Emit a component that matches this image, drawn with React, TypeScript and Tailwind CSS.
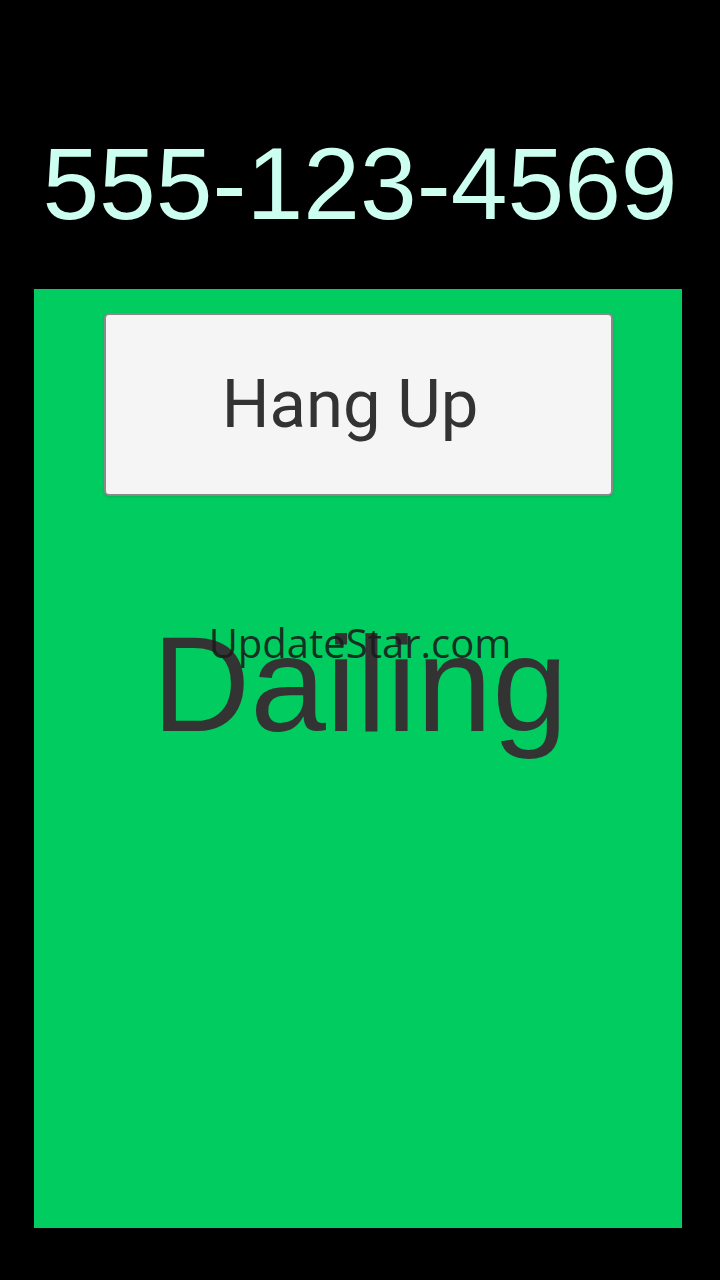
import React from "react";

export default function App() {
  return (
    <div className="w-[720px] h-[1280px] bg-black flex flex-col relative overflow-hidden">
      <div className="h-[289px] w-full pt-[133px] flex justify-center">
        <div
          className="text-[102px] leading-none text-[#ccfff0] h-[102px]"
          style={{ fontFamily: '"Liberation Sans", Arial, sans-serif' }}
        >
          555-123-4569
        </div>
      </div>
      <div className="ml-[34px] w-[648px] h-[939px] bg-[#00cc60] flex flex-col items-center">
        <button
          className="mt-[24px] w-[509px] h-[183px] bg-[#f5f5f5] border-2 border-[#8a8a8a] rounded-[5px] flex items-center justify-center shadow-sm"
        >
          <span
            className="mr-[16px] text-[67px] leading-none text-[#333333]"
            style={{ fontFamily: 'Roboto, "Liberation Sans", sans-serif' }}
          >
            Hang Up
          </span>
        </button>
        <div
          className="mt-[120px] ml-[4px] text-[136px] leading-none text-[#333333]"
          style={{ fontFamily: '"Liberation Sans", Arial, sans-serif' }}
        >
          Dailing
        </div>
      </div>
      <div
        className="absolute top-[623px] left-0 w-full text-center text-[40px] leading-none text-[#1a1a1a]/90"
        style={{ fontFamily: '"Open Sans", "Noto Sans", sans-serif' }}
      >
        UpdateStar.com
      </div>
    </div>
  );
}
